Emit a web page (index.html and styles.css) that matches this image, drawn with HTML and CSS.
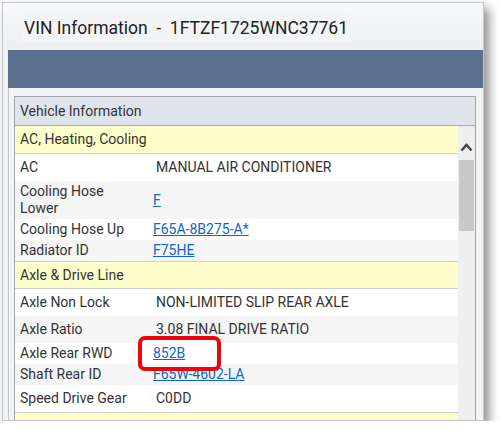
FILE: index.html
```html
<!DOCTYPE html>
<html>
<head>
<meta charset="utf-8">
<link rel="stylesheet" href="styles.css">
</head>
<body>
<div class="window">
  <div class="titlebar"><span class="title">VIN Information  -  1FTZF1725WNC37761</span></div>
  <div class="toolbar"></div>
  <div class="content">
    <div class="panel">
      <div class="panel-head">Vehicle Information</div>
      <div class="panel-body">
        <div class="rows">
          <div class="group first">AC, Heating, Cooling</div>
          <div class="row odd"><div class="label">AC</div><div class="value">MANUAL AIR CONDITIONER</div></div>
          <div class="row even linkrow"><div class="label">Cooling Hose Lower</div><div class="value"><a href="#">F</a></div></div>
          <div class="row odd linkrow"><div class="label">Cooling Hose Up</div><div class="value"><a href="#">F65A-8B275-A*</a></div></div>
          <div class="row even linkrow"><div class="label">Radiator ID</div><div class="value"><a href="#">F75HE</a></div></div>
          <div class="group">Axle &amp; Drive Line</div>
          <div class="row odd"><div class="label">Axle Non Lock</div><div class="value">NON-LIMITED SLIP REAR AXLE</div></div>
          <div class="row even"><div class="label">Axle Ratio</div><div class="value">3.08 FINAL DRIVE RATIO</div></div>
          <div class="row odd linkrow marked"><div class="label">Axle Rear RWD</div><div class="value"><a href="#">852B</a></div><div class="highlight"></div></div>
          <div class="row even linkrow"><div class="label">Shaft Rear ID</div><div class="value"><a href="#">F65W-4602-LA</a></div></div>
          <div class="row odd"><div class="label">Speed Drive Gear</div><div class="value">C0DD</div></div>
          <div class="group">Cabs &amp; Trim</div>
        </div>
        <div class="scrollbar">
          <div class="sb-up"><svg width="13" height="10" viewBox="0 0 13 10"><polyline points="1.5,8.5 6.5,3 11.5,8.5" fill="none" stroke="#4a4a4a" stroke-width="2.6"/></svg></div>
          <div class="sb-thumb"></div>
        </div>
      </div>
    </div>
  </div>
</div>
</body>
</html>
```

FILE: styles.css
```css
html, body {
  margin: 0;
  padding: 0;
  background: #ffffff;
}
body {
  font-family: Roboto, "Liberation Sans", Arial, sans-serif;
  color: #333333;
}
.window {
  position: relative;
  margin: 2px 0 0 2px;
  width: 482px;
  height: 419px;
  box-sizing: border-box;
  border: 1px solid #c6c8cc;
  background: #eff1f4;
  box-shadow: 5px 6px 10px rgba(0, 0, 0, 0.45);
  overflow: hidden;
  display: flex;
  flex-direction: column;
}
.titlebar {
  height: 47px;
  flex: none;
  background: linear-gradient(#f7f8f9, #eceef1);
  display: flex;
  align-items: center;
  padding-left: 19px;
  box-sizing: border-box;
}
.title {
  white-space: pre;
  font-size: 17.5px;
  color: #222;
  background: #f3f4f6;
  padding: 4px 2px;
  margin-top: 2px;
}
.toolbar {
  flex: none;
  height: 38px;
  margin-left: 5px;
  background: #5b6f8f;
}
.content {
  flex: 1;
  margin-left: 5px;
  border-left: 1px solid #c3c5c8;
  background: #f2f3f5;
  padding: 8px 7px 0 5px;
  min-height: 0;
}
.panel {
  border: 1px solid #a2a4a8;
  height: 400px;
  display: flex;
  flex-direction: column;
  background: #fff;
}
.panel-head {
  flex: none;
  height: 28px;
  line-height: 28px;
  padding-left: 5px;
  font-size: 14px;
  background: #dee4eb;
  border-bottom: 1px solid #a7a9ad;
  color: #333;
}
.panel-body {
  flex: 1;
  display: flex;
  min-height: 0;
}
.rows {
  flex: 1;
  font-size: 14px;
  line-height: 17px;
}
.group {
  background: #ffffcc;
  padding: 5px 5px 4px;
  border-top: 1px solid #cfcfcf;
  border-bottom: 1px solid #cfcfcf;
}
.group.first {
  border-top: none;
  padding: 5px 5px 5px;
}
.row {
  display: flex;
  align-items: center;
  padding: 5px 0;
  position: relative;
}
.row.linkrow {
  padding: 2px 0;
}
.row.odd { background: #ffffff; }
.row.even { background: #f5f5f5; }
.label {
  width: 112px;
  flex: none;
  padding: 0 21px 0 5px;
}
.value {
  flex: 1;
  padding-left: 3px;
}
.linkrow .value {
  padding-left: 0;
}
.value a {
  color: #0f66c8;
  text-decoration: underline;
}
.highlight {
  position: absolute;
  z-index: 5;
  left: 123px;
  top: -7px;
  width: 83px;
  height: 35px;
  box-sizing: border-box;
  border: 4px solid #e8070b;
  border-radius: 7px;
}
.scrollbar {
  flex: none;
  width: 17px;
  background: #efefef;
  display: flex;
  flex-direction: column;
  align-items: center;
}
.sb-up {
  height: 34px;
  display: flex;
  align-items: flex-start;
  justify-content: center;
  padding-top: 16px;
  box-sizing: border-box;
}
.sb-thumb {
  width: 15px;
  height: 71px;
  background: #c8c8c8;
}
```
